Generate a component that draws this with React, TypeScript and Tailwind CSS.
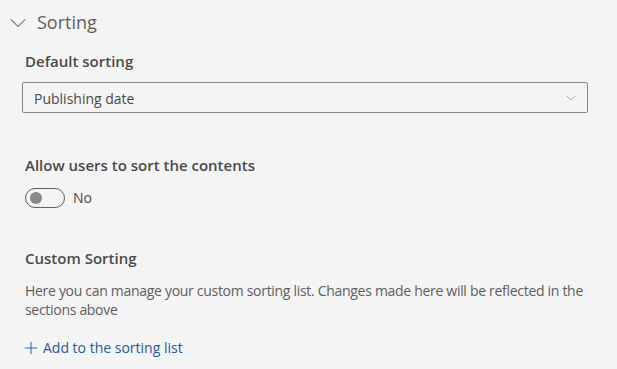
import { ChevronDown, Plus } from "lucide-react";

export default function App() {
  return (
    <div
      className="w-[617px] h-[369px] overflow-hidden bg-[#f4f4f4] text-[#323130]"
      style={{ fontFamily: '"Open Sans", "Noto Sans", sans-serif' }}
    >
      <div className="flex items-center gap-[5px] pl-[4px] pt-[9px] h-[36px]">
        <ChevronDown className="w-[28px] h-[28px] text-[#605e5c]" strokeWidth={0.9} />
        <span className="text-[18px] text-[#605e5c]">Sorting</span>
      </div>

      <div className="px-[25px]">
        <h3 className="mt-[15px] text-[15px] font-semibold text-[#4a4a4a] leading-[20px]">Default sorting</h3>
        <div className="mt-[11px] -ml-[3px] w-[566px] h-[31px] flex items-center justify-between border border-[#8a8886] rounded-[2px] pl-[11px] pr-[8px] pt-[1px]">
          <span className="text-[14px] text-[#4a4a4a]">Publishing date</span>
          <ChevronDown className="w-[16px] h-[16px] text-[#a19f9d]" strokeWidth={1.3} />
        </div>

        <h3 className="mt-[42px] text-[15px] font-semibold text-[#4a4a4a] leading-[20px]">
          Allow users to sort the contents
        </h3>
        <div className="mt-[12px] flex items-center gap-[8px]">
          <div className="w-[40px] h-[20px] rounded-full border border-[#605e5c] flex items-center pl-[4px]">
            <div className="w-[12px] h-[12px] rounded-full bg-[#8a8886]" />
          </div>
          <span className="text-[14px] text-[#4a4a4a]">No</span>
        </div>

        <h3 className="mt-[40px] text-[15px] font-semibold text-[#4a4a4a] leading-[20px]">Custom Sorting</h3>
        <p className="mt-[13px] text-[14px] leading-[19px] text-[#605e5c] tracking-[-0.3px]">
          Here you can manage your custom sorting list. Changes made here will be reflected in the sections above
        </p>
        <button className="mt-[18px] -ml-[4px] flex items-center gap-[2px] text-[14px] text-[#2b579a]">
          <Plus className="w-[20px] h-[20px]" strokeWidth={1.1} />
          Add to the sorting list
        </button>
      </div>
    </div>
  );
}
